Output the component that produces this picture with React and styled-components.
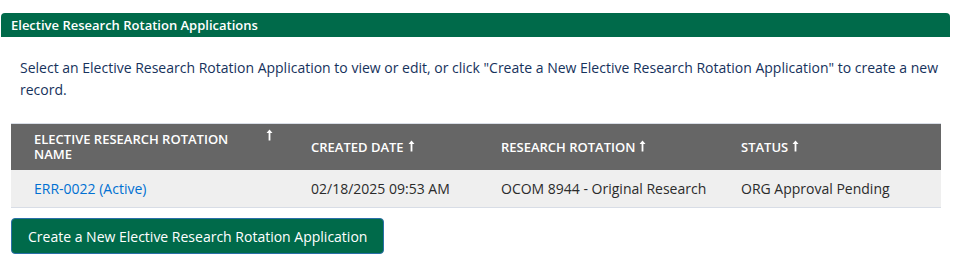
import React from 'react';
import styled, { createGlobalStyle } from 'styled-components';

const GlobalStyle = createGlobalStyle`
  body {
    margin: 0;
    background: #fff;
    font-family: "Open Sans", Lato, sans-serif;
  }
`;

const Page = styled.div`
  padding: 13px 8px 0 1px;
`;

const CardHeader = styled.div`
  height: 24px;
  line-height: 24px;
  padding: 0 10px;
  background: #006a4a;
  border-radius: 4px 4px 0 0;
  color: #fff;
  font-size: 13px;
  font-weight: 600;
`;

const CardBody = styled.div`
  padding: 0 9px 0 10px;
`;

const Intro = styled.p`
  margin: 20px 0 22px;
  padding: 0 0 0 9px;
  font-size: 14px;
  line-height: 22px;
  color: #16325c;
`;

const Table = styled.table`
  width: 930px;
  border-collapse: collapse;
  table-layout: fixed;
  border-top: 1px solid #d8dde6;
`;

const HeadCell = styled.th`
  width: ${(p) => p.$width - 23}px;
  height: 46px;
  padding: 0 0 0 23px;
  background: #666;
  color: #fff;
  font-size: 13px;
  font-weight: 600;
  text-align: left;
  text-transform: uppercase;
  line-height: 15px;
  vertical-align: middle;
`;

const HeadInner = styled.div`
  display: flex;
  align-items: ${(p) => (p.$split ? 'flex-start' : 'center')};
  justify-content: ${(p) => (p.$split ? 'space-between' : 'flex-start')};
  gap: 4px;
  padding-right: ${(p) => (p.$split ? '15px' : '0')};
`;

const HeadLabel = styled.span`
  max-width: ${(p) => (p.$narrow ? '215px' : 'none')};
`;

const Cell = styled.td`
  height: 37px;
  padding: 0 0 0 23px;
  background: #efefef;
  border-bottom: 1px solid #d8dde6;
  font-size: 14px;
  color: #2b2b2b;
`;

const Link = styled.a`
  color: #0070d2;
  text-decoration: none;
`;

const Button = styled.button`
  margin-top: 10px;
  height: 36px;
  padding: 0 16px;
  background: #006a4a;
  border: 1px solid #2a6fa8;
  border-radius: 4px;
  color: #fff;
  font-family: inherit;
  font-size: 14px;
  cursor: pointer;
`;

const SortArrow = () => (
  <svg width="7" height="12" viewBox="0 0 7 12" style={{ flex: 'none', marginTop: '-3px' }}>
    <path d="M3.5 0.5 L6.5 4 H4.4 V11.5 H2.6 V4 H0.5 Z" fill="#fff" />
  </svg>
);

const columns = [
  { label: 'Elective Research Rotation Name', width: 277, split: true },
  { label: 'Created Date', width: 190 },
  { label: 'Research Rotation', width: 240 },
  { label: 'Status', width: 223 },
];

const rows = [
  {
    name: 'ERR-0022 (Active)',
    created: '02/18/2025 09:53 AM',
    rotation: 'OCOM 8944 - Original Research',
    status: 'ORG Approval Pending',
  },
];

const App = () => {
  return (
    <>
      <GlobalStyle />
      <Page>
        <CardHeader>Elective Research Rotation Applications</CardHeader>
        <CardBody>
          <Intro>
            Select an Elective Research Rotation Application to view or edit, or click "Create a New Elective Research Rotation Application" to create a new record.
          </Intro>
          <Table>
            <thead>
              <tr>
                {columns.map((c) => (
                  <HeadCell key={c.label} $width={c.width}>
                    <HeadInner $split={c.split}>
                      <HeadLabel $narrow={c.split}>{c.label}</HeadLabel>
                      <SortArrow />
                    </HeadInner>
                  </HeadCell>
                ))}
              </tr>
            </thead>
            <tbody>
              {rows.map((r) => (
                <tr key={r.name}>
                  <Cell><Link href="#">{r.name}</Link></Cell>
                  <Cell>{r.created}</Cell>
                  <Cell>{r.rotation}</Cell>
                  <Cell>{r.status}</Cell>
                </tr>
              ))}
            </tbody>
          </Table>
          <Button>Create a New Elective Research Rotation Application</Button>
        </CardBody>
      </Page>
    </>
  );
};

export default App;
